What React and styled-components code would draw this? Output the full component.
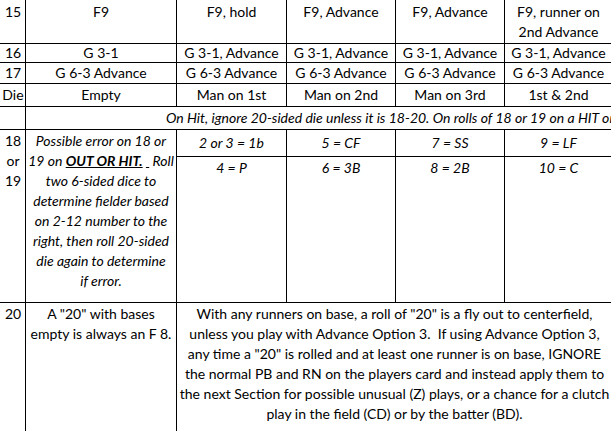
import React from 'react';
import styled, { createGlobalStyle } from 'styled-components';

const GlobalStyle = createGlobalStyle`
    html, body {
        margin: 0;
        padding: 0;
        background: #fff;
    }
    body {
        overflow: hidden;
    }
`;

const Sheet = styled.div`
    display: grid;
    grid-template-columns: 26px 151px 110px 109px 109px 108px;
    grid-template-rows: 44px 19px 21px 23px 23px 27px 146px 140px;
    width: 611px;
    height: 431px;
    overflow: hidden;
    font-family: Lato, 'Open Sans', sans-serif;
    font-size: 14px;
    line-height: 20px;
    color: #000;
`;

const Cell = styled.div`
    box-sizing: border-box;
    border-right: 1px solid #000;
    border-bottom: 1px solid #000;
    display: flex;
    justify-content: center;
    align-items: ${p => (p.$top ? 'flex-start' : 'center')};
    padding-top: ${p => p.$pt || 0}px;
    text-align: center;
    white-space: pre;
    overflow: hidden;
    grid-column: ${p => p.$col || 'auto'};
    grid-row: ${p => p.$row || 'auto'};
`;

const NumCell = styled(Cell)`
    padding-left: 1px;
`;

const NoteCell = styled(Cell)`
    font-style: italic;
`;

const BannerCell = styled(Cell)`
    justify-content: flex-start;
    padding-left: 140px;
    font-style: italic;
`;

const Key = styled.span`
    font-weight: 700;
    text-decoration: underline;
`;

const Gap = styled.span`
    text-decoration: underline;
`;

const plays = [
    { n: '15', cells: ['F9', 'F9, hold', 'F9, Advance', 'F9, Advance', ['F9, runner on', '2nd Advance']], top: true },
    { n: '16', cells: ['G 3-1', 'G 3-1, Advance', 'G 3-1, Advance', 'G 3-1, Advance', 'G 3-1, Advance'] },
    { n: '17', cells: ['G 6-3 Advance', 'G 6-3 Advance', 'G 6-3 Advance', 'G 6-3 Advance', 'G 6-3 Advance'] },
    { n: 'Die', cells: ['Empty', 'Man on 1st', 'Man on 2nd', 'Man on 3rd', '1st & 2nd'] },
];

const fieldersA = ['2 or 3 = 1b', '5 = CF', '7 = SS', '9 = LF'];
const fieldersB = ['4 = P', '6 = 3B', '8 = 2B', '10 = C'];

const lines = text => text.map((t, i) => (
    <React.Fragment key={i}>
        {i > 0 && <br />}
        {t}
    </React.Fragment>
));

const App = () => (
    <>
        <GlobalStyle />
        <Sheet>
            {plays.map(row => (
                <React.Fragment key={row.n}>
                    <NumCell $top={row.top} $pt={row.top ? 2 : 0}>{row.n}</NumCell>
                    {row.cells.map((c, i) => (
                        <Cell key={i} $top={row.top} $pt={row.top ? 2 : 0}>
                            <div>{Array.isArray(c) ? lines(c) : c}</div>
                        </Cell>
                    ))}
                </React.Fragment>
            ))}

            <NumCell />
            <BannerCell $col="2 / 7">
                On Hit, ignore 20-sided die unless it is 18-20. On rolls of 18 or 19 on a HIT or
            </BannerCell>

            <NumCell $row="6 / 8" $top $pt={1}>
                <div>{lines(['18', 'or', '19'])}</div>
            </NumCell>
            <NoteCell $row="6 / 8" $top $pt={1}>
                <div>
                    {'Possible error on 18 or'}<br />
                    {'19 on '}<Key>OUT OR HIT.</Key> <Gap> </Gap>{' Roll'}<br />
                    {'two 6-sided dice to'}<br />
                    {'determine fielder based'}<br />
                    {'on 2-12 number to the'}<br />
                    {'right, then roll 20-sided'}<br />
                    {'die again to determine'}<br />
                    {'if error.'}
                </div>
            </NoteCell>
            {fieldersA.map(f => <NoteCell key={f}>{f}</NoteCell>)}
            {fieldersB.map(f => <NoteCell key={f} $top $pt={1}>{f}</NoteCell>)}

            <NumCell $top $pt={1}>20</NumCell>
            <Cell $top $pt={1}>
                <div>{lines(['A "20" with bases', 'empty is always an F 8.'])}</div>
            </Cell>
            <Cell $col="3 / 7" $top $pt={1}>
                <div>
                    {lines([
                        'With any runners on base, a roll of "20" is a fly out to centerfield,',
                        'unless you play with Advance Option 3.  If using Advance Option 3,',
                        'any time a "20" is rolled and at least one runner is on base, IGNORE',
                        'the normal PB and RN on the players card and instead apply them to',
                        'the next Section for possible unusual (Z) plays, or a chance for a clutch',
                        'play in the field (CD) or by the batter (BD).',
                    ])}
                </div>
            </Cell>
        </Sheet>
    </>
);

export default App;
